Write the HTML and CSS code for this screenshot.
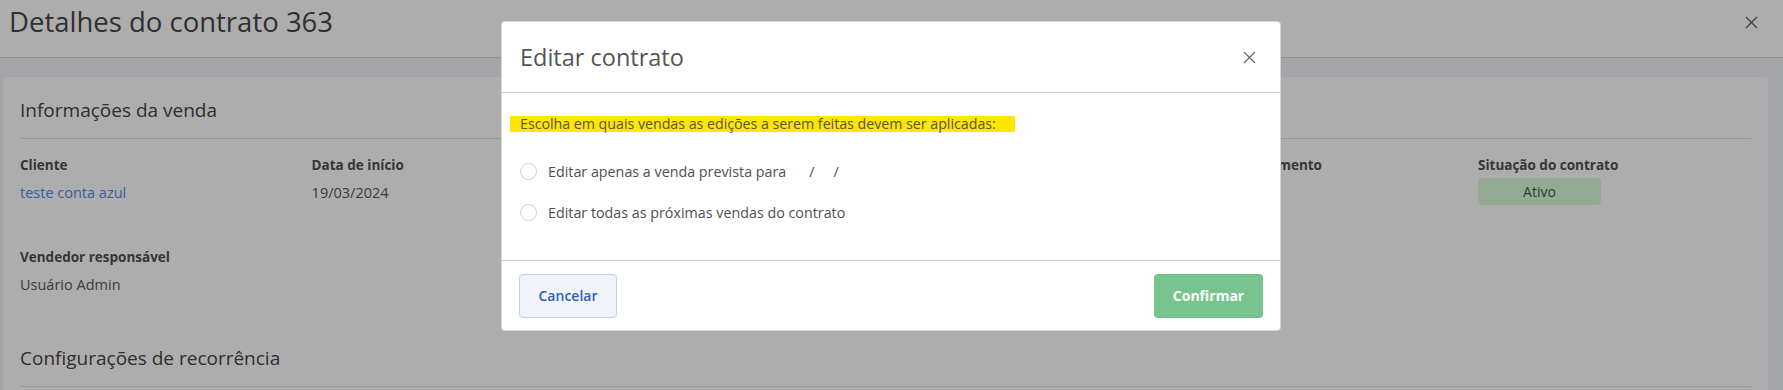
FILE: index.html
```html
<!DOCTYPE html>
<html lang="pt-BR">
<head>
<meta charset="utf-8">
<title>Detalhes do contrato 363</title>
<link rel="stylesheet" href="styles.css">
</head>
<body>
<div class="page">
  <header class="page-header">
    <h1 class="page-title">Detalhes do contrato 363</h1>
    <button class="page-close" aria-label="Fechar">
      <svg width="13" height="13" viewBox="0 0 13 13"><path d="M1 1L12 12M12 1L1 12" stroke="#5e5e5e" stroke-width="1.3" fill="none"/></svg>
    </button>
  </header>
  <main class="page-body">
    <section class="card">
      <h2 class="section-title">Informações da venda</h2>
      <div class="fields">
        <div class="field"><div class="label">Cliente</div><div class="value link">teste conta azul</div></div>
        <div class="field"><div class="label">Data de início</div><div class="value">19/03/2024</div></div>
        <div class="field"></div>
        <div class="field"></div>
        <div class="field"><div class="label">Data de vencimento</div></div>
        <div class="field"><div class="label">Situação do contrato</div><div class="badge">Ativo</div></div>
        <div class="field"><div class="label">Vendedor responsável</div><div class="value">Usuário Admin</div></div>
      </div>
      <h2 class="section-title section-second">Configurações de recorrência</h2>
    </section>
  </main>
</div>

<div class="overlay">
  <div class="modal" role="dialog">
    <div class="modal-header">
      <h3 class="modal-title">Editar contrato</h3>
      <button class="modal-close" aria-label="Fechar">
        <svg width="13" height="13" viewBox="0 0 13 13"><path d="M1 1L12 12M12 1L1 12" stroke="#6b6b6b" stroke-width="1.2" fill="none"/></svg>
      </button>
    </div>
    <div class="modal-body">
      <div class="hint"><span class="hint-text">Escolha em quais vendas as edições a serem feitas devem ser aplicadas:</span></div>
      <label class="option"><span class="radio"></span><span class="option-text">Editar apenas a venda prevista para<span class="blank b1"></span>/<span class="blank b2"></span>/</span></label>
      <label class="option"><span class="radio"></span><span class="option-text">Editar todas as próximas vendas do contrato</span></label>
    </div>
    <div class="modal-footer">
      <button class="btn btn-cancel">Cancelar</button>
      <button class="btn btn-confirm">Confirmar</button>
    </div>
  </div>
</div>
</body>
</html>
```
FILE: styles.css
```css
* { box-sizing: border-box; }
html, body { margin: 0; padding: 0; }
body {
  width: 1783px;
  height: 390px;
  overflow: hidden;
  font-family: "Open Sans", "Noto Sans", sans-serif;
  background: #f1f3f8;
  position: relative;
}
button { font-family: inherit; }

.page { display: flex; flex-direction: column; }

.page-header {
  height: 58px;
  background: #ffffff;
  border-bottom: 1px solid #d1d3d8;
  display: flex;
  align-items: flex-start;
  justify-content: space-between;
  padding: 0 25px 0 9px;
}
.page-title {
  margin: 3px 0 0 0;
  font-size: 27.5px;
  font-weight: 400;
  color: #474747;
  line-height: 37px;
}
.page-close {
  margin-top: 16px;
  background: none;
  border: none;
  padding: 0;
  width: 13px;
  height: 13px;
  display: flex;
}

.page-body { padding: 19px 15px 0 3px; }

.card {
  background: #ffffff;
  border-radius: 4px;
  padding: 20px 17px 0 17px;
  height: 330px;
}
.section-title {
  margin: 0;
  font-size: 19px;
  font-weight: 400;
  color: #454545;
  line-height: 26px;
  padding-bottom: 15px;
  border-bottom: 1px solid #dbdde1;
}
.section-second { margin-top: 48px; }

.fields {
  display: grid;
  grid-template-columns: repeat(6, 291.6px);
  row-gap: 43px;
  margin-top: 17px;
}
.field { height: 49px; white-space: nowrap; }
.label {
  font-size: 13.5px;
  font-weight: 700;
  color: #505050;
  line-height: 18px;
}
.value {
  margin-top: 9px;
  font-size: 14.5px;
  color: #585858;
  line-height: 20px;
}
.value.link { color: #4d8ff5; }
.badge {
  margin-top: 4px;
  width: 123px;
  height: 27px;
  border-radius: 4px;
  background: #dbfbd8;
  color: #355f3a;
  font-size: 14px;
  line-height: 27px;
  text-align: center;
}

.overlay {
  position: fixed;
  inset: 0;
  background: rgba(0, 0, 0, 0.32);
}
.modal {
  position: absolute;
  top: 21px;
  left: 501px;
  width: 780px;
  background: #ffffff;
  border: 1px solid #cfd8e3;
  border-radius: 4px;
}
.modal-header {
  height: 71px;
  border-bottom: 1px solid #c8d3df;
  display: flex;
  align-items: center;
  justify-content: space-between;
  padding: 0 24px 0 18px;
}
.modal-title {
  margin: 0;
  font-size: 23.5px;
  font-weight: 400;
  color: #555555;
  line-height: 32px;
}
.modal-close {
  background: none;
  border: none;
  padding: 0;
  width: 13px;
  height: 13px;
  display: flex;
}

.modal-body {
  padding: 23px 18px 27px 18px;
  border-bottom: 1px solid #c8d3df;
}
.hint { display: flex; margin: 0 0 19px -10px; }
.hint-text {
  display: block;
  background: #ffe600;
  color: #55554a;
  font-size: 14.2px;
  line-height: 16px;
  height: 16px;
  padding: 0 19px 0 10px;
  white-space: nowrap;
}
.option {
  height: 41px;
  display: flex;
  align-items: center;
  gap: 11px;
}
.radio {
  width: 17px;
  height: 17px;
  border-radius: 50%;
  border: 1px solid #c7cfd9;
  background: #fff;
  flex: none;
}
.option-text {
  font-size: 14.3px;
  color: #4f4f4f;
  line-height: 20px;
  white-space: nowrap;
}
.blank { display: inline-block; }
.b1 { width: 23px; }
.b2 { width: 19px; }

.modal-footer {
  height: 69px;
  display: flex;
  align-items: center;
  justify-content: space-between;
  padding: 0 17px 0 17px;
}
.btn {
  height: 44px;
  border-radius: 4px;
  font-size: 14px;
  cursor: pointer;
}
.btn-cancel {
  width: 98px;
  background: #f0f4fa;
  border: 1px solid #c8d3df;
  color: #2d5db5;
  font-weight: 600;
}
.btn-confirm {
  width: 109px;
  background: #78c48e;
  border: none;
  color: #ffffff;
  font-weight: 700;
}
```
